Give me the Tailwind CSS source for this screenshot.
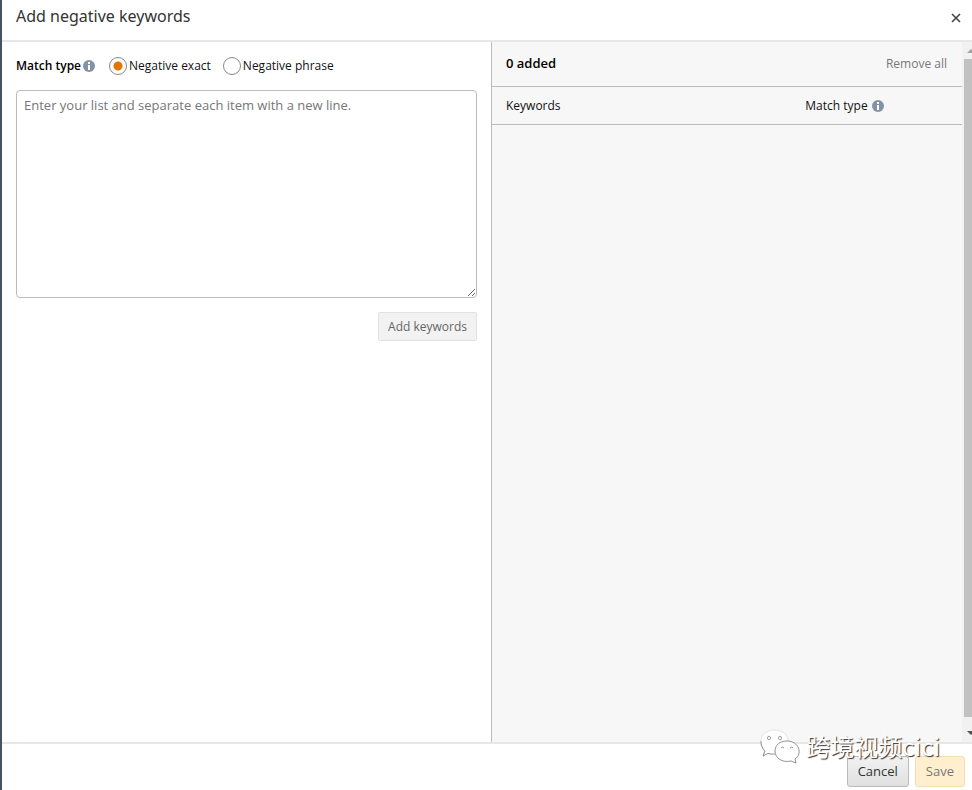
<!DOCTYPE html>
<html lang="en">
<head>
  <meta charset="utf-8">
  <meta name="viewport" content="width=device-width, initial-scale=1">
  <title>Add negative keywords</title>
  <script src="https://cdn.jsdelivr.net/npm/@tailwindcss/browser@4"></script>
</head>
<body class="bg-[#475264] font-['Open_Sans','Noto_Sans_CJK_SC',sans-serif] text-xs text-[#111]">
  <div class="relative ml-0.5 flex h-screen flex-col overflow-hidden bg-white">
    <header class="flex h-[42px] shrink-0 items-center justify-between border-b-2 border-[#e7e7e7] pr-2.5 pb-2 pl-3.5">
      <h1 class="font-['Noto_Sans',sans-serif] text-base text-[#333]">Add negative keywords</h1>
      <button type="button" aria-label="Close" class="pt-1">
        <svg class="size-3" viewBox="0 0 12 12" fill="none" stroke="#444" stroke-width="1.6"><path d="M2 2l8 8M10 2l-8 8"/></svg>
      </button>
    </header>

    <main class="flex min-h-0 flex-1">
      <div class="grid flex-1 grid-cols-[49fr_47fr]">
        <section class="border-r border-[#bbb] px-3.5 pt-3.5">
          <div role="radiogroup" aria-labelledby="match-type" class="flex h-5 items-center">
            <span id="match-type" class="font-semibold text-black">Match type</span>
            <svg class="ml-0.5 size-3" viewBox="0 0 12 12"><circle cx="6" cy="6" r="6" fill="#8492a6"/><path d="M5 2h2v2H5zM5 5h2v5H5z" fill="#fff"/></svg>
            <label class="ml-3.5 flex items-center gap-0.5">
              <input type="radio" name="match" checked class="size-[18px] appearance-none rounded-full border border-[#888] bg-white bg-[radial-gradient(circle,#e47600_4px,transparent_5px)]">
              Negative exact
            </label>
            <label class="ml-3 flex items-center gap-0.5">
              <input type="radio" name="match" class="size-[18px] appearance-none rounded-full border border-[#888] bg-white">
              Negative phrase
            </label>
          </div>
          <textarea aria-label="Keywords list" class="mt-3.5 block h-52 w-full resize rounded-[4px] border border-[#bbb] px-[7px] py-1.5 text-[13px] leading-4 placeholder:text-[#767676]" placeholder="Enter your list and separate each item with a new line."></textarea>
          <div class="mt-3.5 flex justify-end">
            <button type="button" class="h-[29px] rounded-[2px] border border-[#e2e2e2] bg-[#f2f2f2] px-[9px] text-[#666]">Add keywords</button>
          </div>
        </section>

        <section class="bg-[#f7f7f7]">
          <div class="flex h-[45px] items-center justify-between border-b border-[#bbb] pr-[15px] pl-3.5">
            <h2 class="text-[13px] font-semibold text-black">0 added</h2>
            <button type="button" class="text-[#777]">Remove all</button>
          </div>
          <div class="border-b border-[#bbb]">
            <table class="w-full table-fixed">
              <thead>
                <tr class="h-[37px] text-left">
                  <th class="w-2/3 pl-3.5 font-normal">Keywords</th>
                  <th class="font-normal">
                    <div class="flex items-center gap-1">
                      Match type
                      <svg class="size-3" viewBox="0 0 12 12"><circle cx="6" cy="6" r="6" fill="#8492a6"/><path d="M5 2h2v2H5zM5 5h2v5H5z" fill="#fff"/></svg>
                    </div>
                  </th>
                </tr>
              </thead>
              <tbody></tbody>
            </table>
          </div>
        </section>
      </div>

      <!-- scrollbar -->
      <div class="flex w-2.5 flex-col overflow-hidden bg-[#f1f1f1]">
        <svg class="h-[17px] w-2.5" viewBox="0 0 10 17"><path d="M5 11l4-4 4 4z" fill="#a3a3a3"/></svg>
        <div class="ml-0.5 flex-1 bg-[#c1c1c1]"></div>
        <svg class="h-[25px] w-2.5" viewBox="0 0 10 25"><path d="M5 14l4 4 4-4z" fill="#505050"/></svg>
      </div>
    </main>

    <footer class="flex h-12 shrink-0 items-end justify-end gap-1.5 border-t-2 border-[#e7e7e7] pr-[7px] pb-[3px] text-[13px] text-[#333]">
      <button type="button" class="h-[31px] rounded-[3px] border border-[#bbb] bg-linear-to-b from-[#f2f2f2] to-[#e0e0e0] px-2.5">Cancel</button>
      <button type="button" class="h-[31px] rounded-[3px] border border-[#f3dfb0] bg-[#ffefcf] px-2.5 text-[#777]">Save</button>
    </footer>

    <!-- watermark -->
    <div class="pointer-events-none absolute right-8 bottom-[26px] flex items-center gap-1.5">
      <svg class="h-9 w-10" viewBox="0 0 40 36" fill="#fff" stroke-width=".8">
        <path d="M11 26q-2 0-3-.6l-5 2.6 1.500-5C-3 16 1 2 14 2c9 0 14 5 14 11" stroke="#ddd"/>
        <path d="M1 13c0 4 1 7 4 10l-2 5 5-2.600q3 1 7 .6" stroke="#777"/>
        <ellipse cx="9" cy="10" rx="1.500" ry="1.800" stroke="#888"/><ellipse cx="20" cy="10" rx="1.500" ry="1.800" stroke="#888"/>
        <path d="M27 13c12 0 16 13 8 18l1 4-5-2c-9 2-16-3-16-10 0-6 5-10 12-10z" stroke="#777"/>
        <path d="M21 20q1.500-2 3 0M30 20q1.500-2 3 0" stroke="#777"/>
      </svg>
      <span class="font-['Noto_Sans_CJK_SC',sans-serif] text-2xl text-white [text-shadow:1px_1px_1px_#333]">跨境视频cici</span>
    </div>
  </div>
</body>
</html>
